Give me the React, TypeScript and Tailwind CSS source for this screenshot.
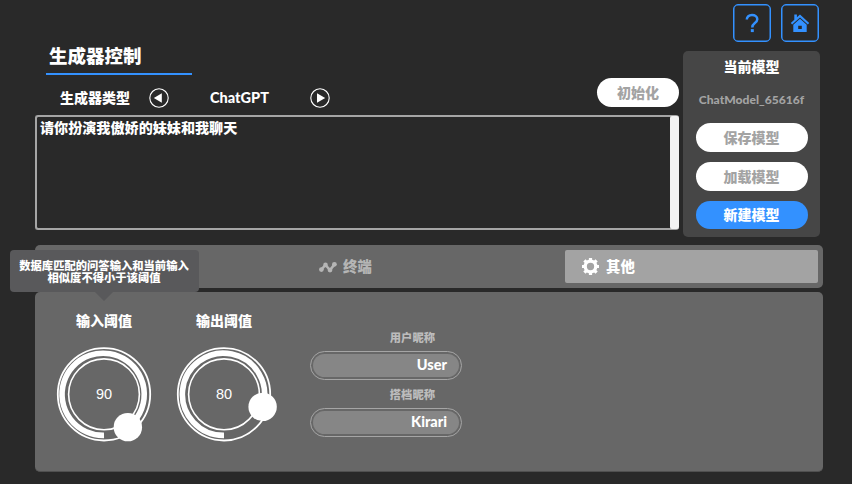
import type { ReactNode } from 'react';

function Pill({ className = '', children }: { className?: string; children: ReactNode }) {
  return (
    <button className={`flex shrink-0 items-center justify-center rounded-full pb-[2px] text-[14px] leading-none font-black ${className}`}>
      {children}
    </button>
  );
}

function Arrow({ left = false }: { left?: boolean }) {
  return (
    <svg width="20" height="20" viewBox="0 0 20 20" className="shrink-0">
      <circle cx="10" cy="10" r="9.2" fill="none" stroke="#fff" strokeWidth="1.1" />
      <path d={left ? 'M4.8 10 12.8 5.2v9.6z' : 'M15.2 10 7 5.2v9.6z'} fill="#fff" />
    </svg>
  );
}

// The track fills clockwise from the bottom of the dial.
function Dial({ label, value }: { label: string; value: number }) {
  const rest = ((100 - value) / 100) * Math.PI * 2;
  const x = 60 + 40.6 * Math.sin(rest);
  const y = 50.3 + 40.6 * Math.cos(rest);
  return (
    <div className="flex w-[120px] flex-col items-center">
      <div className="h-[14px] text-[14px] leading-[14px] font-black">{label}</div>
      <div className="mt-[17px] grid place-items-center">
        <svg width="120" height="100" viewBox="0 0 120 100" className="col-start-1 row-start-1" fill="none" stroke="#fff">
          <circle cx="60" cy="50.3" r="46.2" strokeWidth="1.8" />
          <circle cx="60" cy="50.3" r="35.4" strokeWidth="1.6" />
          <path d={`M60 91.4A41.1 41.1 0 1 1 ${x} ${y}`} strokeWidth="5.6" />
          <circle cx={x} cy={y} r="14.2" fill="#fff" stroke="none" />
        </svg>
        <span className="col-start-1 row-start-1 font-['Liberation_Sans',sans-serif] text-[14.5px] leading-none">{value}</span>
      </div>
    </div>
  );
}

function Field({ label, value }: { label: string; value: string }) {
  return (
    <div className="flex h-[57px] w-[152px] flex-col">
      <div className="h-[11px] pr-[27px] text-right text-[11.3px] leading-[11px] font-black text-[#bcbcbc]">{label}</div>
      <div className="mt-[8px] h-[29px] rounded-full border border-[#a5a5a5] p-[2px]">
        <div className="flex h-full items-center justify-end rounded-full bg-[#868686] pr-[12px] font-['Lato','Noto_Sans_CJK_SC',sans-serif] text-[14.5px] leading-none font-black">
          {value}
        </div>
      </div>
    </div>
  );
}

export default function App() {
  return (
    <div className="flex h-[484px] w-[852px] flex-col overflow-hidden bg-[#292929] pl-[35px] font-['Noto_Sans_CJK_SC',sans-serif] text-white">
      <div className="flex h-[245px] shrink-0">
        <div className="flex w-[644px] flex-col">
          <h1 className="ml-[11px] mt-[46px] h-[29px] w-[146px] border-b-2 border-[#3391ff] pl-[3px] text-[18.5px] leading-[18px] font-black">
            生成器控制
          </h1>
          <div className="flex h-[40px]">
            <div className="flex h-[46px] items-center pl-[25px] text-[14px] leading-none font-black">
              <span className="w-[89px] pb-[2px]">生成器类型</span>
              <Arrow left />
              <span className="w-[141px] text-center font-['Lato',sans-serif] text-[14.5px]">ChatGPT</span>
              <Arrow />
            </div>
            <Pill className="ml-auto mt-[3px] h-[29px] w-[82px] bg-white text-[#a3a3a3]">初始化</Pill>
          </div>
          <div className="flex h-[115px] rounded-[3px] border-2 border-r-0 border-[#a5a5a5]">
            <div className="flex-1 pl-[3px] pt-[2px] text-[14.1px] leading-[16px] font-black">请你扮演我傲娇的妹妹和我聊天</div>
            <div className="-my-[1px] w-[9px] rounded-[2px] bg-[#f3f3f3]" />
          </div>
        </div>
        <div className="ml-[4px] flex w-[137px] flex-col">
          <div className="flex h-[51px] justify-end gap-[10px] pr-px pt-[4px]">
            <button className="flex h-[38px] w-[38px] items-center justify-center rounded-[5px] border-[1.5px] border-[#3391ff] shadow-[inset_0_0_0_0.5px_#3391ff]">
              <svg width="14" height="20" viewBox="0 0 14 20" fill="none" stroke="#3391ff" strokeWidth="2.5">
                <path d="M1.8 6.6C1.8 3.7 4 2 7 2s5.3 1.6 5.3 4.2c0 2-1.2 2.9-2.7 4C8 11.400 7.300 12 7.300 14.400" />
                <path d="M7.300 16.100v3" strokeWidth="3" />
              </svg>
            </button>
            <button className="flex h-[38px] w-[38px] items-center justify-center rounded-[5px] border-[1.5px] border-[#3391ff] shadow-[inset_0_0_0_0.5px_#3391ff]">
              <svg width="20" height="20" viewBox="0 0 20 20">
                <path d="M4.300 1.600h2.600v2.700L10 1.500l9.200 8.600-1.400 1.500L10 4.400l-7.800 7.200-1.400-1.500 3.500-3.300z" fill="#3391ff" />
                <path fillRule="evenodd" d="M10 5.700 16.700 11.800v7.200H3.300v-7.200zM8.200 12.800v3.200h3.600v-3.200z" fill="#3391ff" />
              </svg>
            </button>
          </div>
          <div className="flex h-[186px] flex-col items-center rounded-[5px] bg-[#464646]">
            <div className="mt-[8px] h-[15px] text-[14px] leading-[14px] font-black">当前模型</div>
            <div className="mt-[18px] h-[31px] font-['Lato',sans-serif] text-[12.1px] leading-[16px] font-black text-[#a3a3a3]">ChatModel_65616f</div>
            <div className="flex flex-col gap-[10px]">
              <Pill className="h-[29px] w-[112px] bg-white text-[#a3a3a3]">保存模型</Pill>
              <Pill className="h-[29px] w-[112px] bg-white text-[#a3a3a3]">加载模型</Pill>
              <Pill className="h-[28px] w-[112px] bg-[#3391ff] text-white">新建模型</Pill>
            </div>
          </div>
        </div>
      </div>

      <div className="relative flex h-[43px] w-[788px] shrink-0 rounded-[5px] bg-[#676767] pt-[5px] text-[14.4px] leading-none font-black">
        <div className="flex h-[33px] w-[530px] items-center gap-[6px] pl-[284px] text-[#b5b5b5]">
          <svg width="18" height="12" viewBox="0 0 18 12" fill="#b5b5b5" stroke="#b5b5b5">
            <path d="M2.4 8.4 6.500 4 11 9 15.500 3.400" fill="none" strokeWidth="2.5" />
            <g stroke="none">
              <circle cx="2.4" cy="8.6" r="2.4" />
              <circle cx="6.5" cy="3.9" r="2.3" />
              <circle cx="11" cy="9.1" r="2.4" />
              <circle cx="15.4" cy="3.3" r="2.4" />
            </g>
          </svg>
          <span>终端</span>
        </div>
        <div className="flex h-[33px] w-[253px] items-center gap-[7px] rounded-[2px] bg-[#a3a3a3] pl-[17px]">
          <svg width="17" height="17" viewBox="-8.5 -8.5 17 17" fill="none" stroke="#fff">
            <circle r="5.3" strokeWidth="3.3" />
            <path d="M0-8.500v3M0 8.500v-3M-8.500 0h3M8.500 0h-3M-6.100-6.100l2 2M6.100 6.100l-2-2M-6.100 6.100l2-2M6.100-6.100l-2 2" strokeWidth="3.2" />
          </svg>
          <span>其他</span>
        </div>
        <div className="absolute left-[-25.500px] top-[5px] z-10 flex h-[42px] w-[189px] flex-col items-center rounded-[4px] bg-[#59595b] pt-[10px] text-[11.3px] leading-[11.5px]">
          <span>数据库匹配的问答输入和当前输入</span>
          <span>相似度不得小于该阈值</span>
          <svg width="18" height="9" viewBox="0 0 18 9" className="absolute left-[85px] top-[42px]">
            <path d="M0 0h18L9 9z" fill="#59595b" />
          </svg>
        </div>
      </div>

      <div className="mt-[4px] flex h-[180px] w-[788px] shrink-0 rounded-[5px] border-b border-[#505050] bg-[#676767] pl-[9px] pt-[21px]">
        <Dial label="输入阈值" value={90} />
        <Dial label="输出阈值" value={80} />
        <div className="ml-[26px] mt-[19px]">
          <Field label="用户昵称" value="User" />
          <Field label="搭档昵称" value="Kirari" />
        </div>
      </div>
    </div>
  );
}
